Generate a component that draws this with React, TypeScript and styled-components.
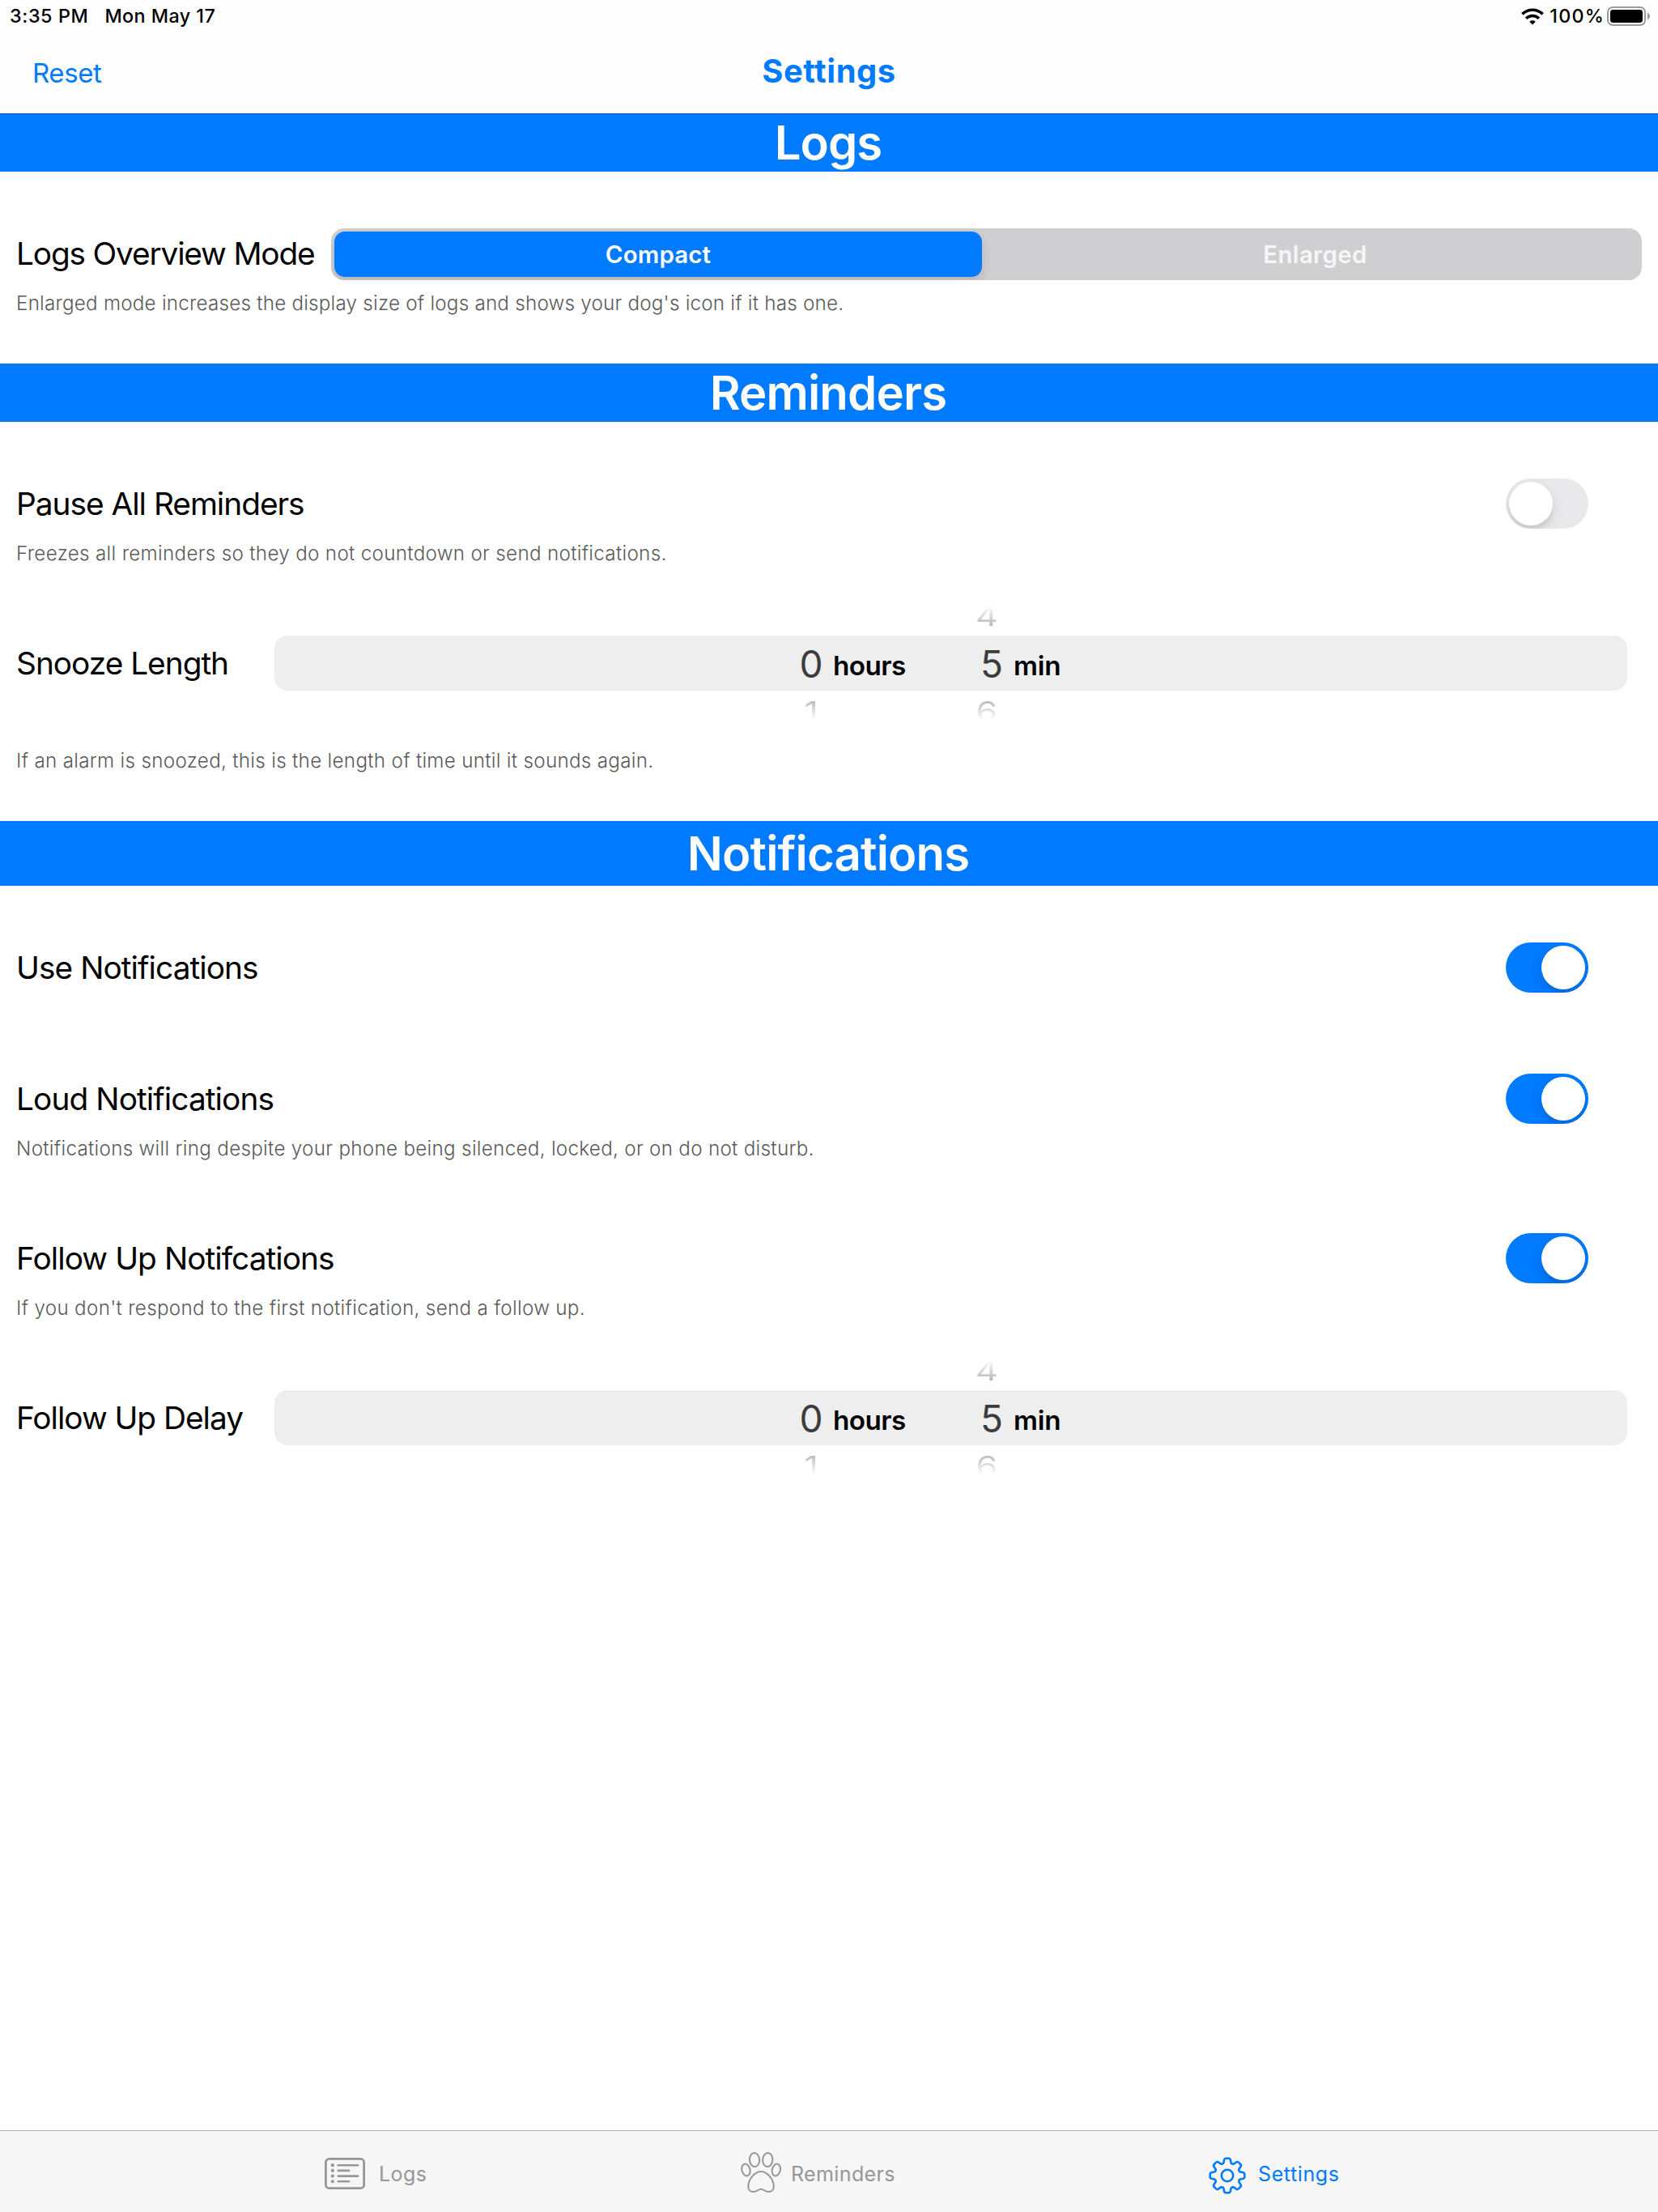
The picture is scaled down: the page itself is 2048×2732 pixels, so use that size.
import React, { useState } from "react";
import styled, { createGlobalStyle } from "styled-components";

const BLUE = "#007aff";
const GRAY = "#979797";

const GlobalStyle = createGlobalStyle`
  *, *::before, *::after { box-sizing: border-box; }
  body {
    margin: 0;
    background: #fff;
    color: #000;
    font-family: Inter, "Liberation Sans", sans-serif;
  }
  button { font: inherit; color: inherit; border: 0; padding: 0; background: none; }
`;

const Screen = styled.div`
  display: flex;
  flex-direction: column;
  width: 2048px;
  height: 2732px;
  overflow: hidden;
`;

/* ---------- status bar ---------- */

const StatusBar = styled.div`
  display: flex;
  align-items: center;
  height: 40px;
  padding: 0 9px 0 12px;
  background: #fefefe;
  font-size: 23.3px;
  font-weight: 500;
  white-space: nowrap;
`;

const StatusText = styled.span<{ $track: number; $gap?: number }>`
  padding-bottom: 1px;
  letter-spacing: ${(p) => p.$track}px;
  margin-left: ${(p) => p.$gap ?? 0}px;
`;

const StatusSpacer = styled.div`
  flex: 1;
`;

const WifiSvg = styled.svg`
  width: 28px;
  height: 21px;
`;

const BatterySvg = styled.svg`
  width: 54px;
  height: 24px;
  margin-left: 3px;
`;

/* ---------- navigation bar ---------- */

const NavBar = styled.header`
  display: grid;
  grid-template-columns: 1fr auto 1fr;
  align-items: center;
  height: 101px;
  padding: 0 40px;
  background: #fefefe;
  border-bottom: 1px solid #0055b3;
  color: ${BLUE};
`;

const NavButton = styled.button`
  justify-self: start;
  font-size: 33px;
  letter-spacing: -0.4px;
`;

const NavTitle = styled.h1`
  margin: 0;
  padding-bottom: 6px;
  font-size: 39.8px;
  font-weight: 700;
  letter-spacing: 0.6px;
`;

/* ---------- settings list ---------- */

const Content = styled.main`
  flex: 1;
`;

const Band = styled.h2<{ $height: number; $track: number }>`
  display: flex;
  align-items: center;
  justify-content: center;
  height: ${(p) => p.$height}px;
  margin: 0;
  padding: 0 2px 1px 0;
  background: ${BLUE};
  color: #fff;
  font-size: 58px;
  font-weight: 600;
  line-height: 68px;
  letter-spacing: ${(p) => p.$track}px;
`;

const SectionBody = styled.div<{ $bottom: number }>`
  padding: 70px 0 ${(p) => p.$bottom}px 20px;
`;

const SettingRow = styled.div<{ $top?: number }>`
  display: flex;
  align-items: center;
  margin-top: ${(p) => p.$top ?? 0}px;
`;

const Label = styled.div<{ $width?: number; $track: number; $lift?: number }>`
  width: ${(p) => (p.$width ? `${p.$width}px` : "auto")};
  padding-bottom: ${(p) => p.$lift ?? 0}px;
  font-size: 38.8px;
  line-height: 48px;
  letter-spacing: ${(p) => p.$track}px;
  white-space: nowrap;
`;

const Hint = styled.p<{ $top: number; $track: number }>`
  margin: ${(p) => p.$top}px 0 0;
  color: #5a5a5a;
  font-size: 24.2px;
  font-weight: 300;
  line-height: 30px;
  letter-spacing: ${(p) => p.$track}px;
`;

/* ---------- segmented control ---------- */

const Segmented = styled.div`
  display: flex;
  flex: 1;
  height: 64px;
  margin-right: 20px;
  padding: 4px;
  border-radius: 16px;
  background: #cfcfd2;
  overflow: hidden;
`;

const Segment = styled.button<{ $active: boolean; $track: number }>`
  flex: ${(p) => (p.$active ? "0 0 800px" : "1")};
  border-radius: 13px;
  background: ${(p) => (p.$active ? BLUE : "transparent")};
  box-shadow: ${(p) => (p.$active ? "0 6px 14px rgba(0, 0, 0, 0.13)" : "none")};
  color: ${(p) => (p.$active ? "#fff" : "#f6f6f7")};
  font-size: 29.4px;
  font-weight: 600;
  letter-spacing: ${(p) => p.$track}px;
  padding: ${(p) => (p.$active ? "0" : "0 0 0 12px")};
`;

/* ---------- switch ---------- */

const SwitchTrack = styled.button<{ $on: boolean }>`
  display: flex;
  justify-content: ${(p) => (p.$on ? "flex-end" : "flex-start")};
  width: 102px;
  height: 62px;
  margin: 0 86px 0 auto;
  padding: 4px;
  border-radius: 31px;
  background: ${(p) => (p.$on ? BLUE : "#e9e9eb")};
  overflow: hidden;
`;

const SwitchKnob = styled.span`
  width: 54px;
  height: 54px;
  border-radius: 50%;
  background: #fff;
  box-shadow: 0 6px 16px rgba(0, 0, 0, 0.12), 0 6px 2px rgba(0, 0, 0, 0.04);
`;

/* ---------- time wheel ---------- */

const Wheel = styled.div`
  flex: 1;
  height: 144px;
  margin-right: 38px;
`;

const WheelLine = styled.div<{ $second: number }>`
  display: grid;
  grid-template-columns: 643px 40px ${(p) => p.$second}px 40px 1fr;
  grid-template-areas: ". hour hourUnit minute minuteUnit";
  align-items: center;
`;

const WheelSelected = styled(WheelLine)`
  height: 68px;
  border-radius: 16px;
  background: #eeeeee;
  color: #3c3c3c;
`;

const WheelNeighbour = styled(WheelLine)<{ $side: "above" | "below" }>`
  height: 38px;
  color: #b4b4b4;
  padding: ${(p) => (p.$side === "above" ? "0 0 12px" : "11px 0 0")};
  mask-image: ${(p) =>
    p.$side === "above"
      ? "linear-gradient(to bottom, transparent 2px, #000 26px)"
      : "linear-gradient(to top, transparent 2px, #000 28px)"};
`;

const Digit = styled.span<{ $area: "hour" | "minute"; $flat?: boolean }>`
  grid-area: ${(p) => p.$area};
  display: block;
  padding-top: ${(p) => (p.$flat ? 0 : 1)}px;
  text-align: center;
  font-size: 46px;
  font-weight: 400;
  line-height: 26px;
  transform: ${(p) => (p.$flat ? "scale(0.94, 0.74)" : "none")};
`;

const Unit = styled.span<{ $area: "hourUnit" | "minuteUnit"; $track: number }>`
  grid-area: ${(p) => p.$area};
  padding: 5px 0 0 7px;
  color: #000;
  font-size: 33.2px;
  font-weight: 600;
  line-height: 40px;
  letter-spacing: ${(p) => p.$track}px;
`;

/* ---------- tab bar ---------- */

const TabBar = styled.nav`
  display: flex;
  height: 101px;
  padding: 0 0 0 401px;
  border-top: 1px solid #b2b3b5;
  background: #f6f6f6;
`;

const Tab = styled.button<{ $active?: boolean; $width: number; $gap: number; $track: number }>`
  display: flex;
  align-items: center;
  gap: ${(p) => p.$gap}px;
  width: ${(p) => p.$width}px;
  height: 106px;
  color: ${(p) => (p.$active ? BLUE : GRAY)};
  font-size: 25px;
  letter-spacing: ${(p) => p.$track}px;
`;

const TabIcon = styled.svg<{ $w: number; $h: number; $shift?: number }>`
  flex: none;
  width: ${(p) => p.$w}px;
  height: ${(p) => p.$h}px;
  margin-top: ${(p) => p.$shift ?? 0}px;
  fill: none;
  stroke: currentColor;
  stroke-linecap: round;
  stroke-linejoin: round;
`;

/* ---------- icons ---------- */

const WifiIcon = () => (
  <WifiSvg viewBox="0 0 28 21" fill="none" stroke="#000" strokeWidth="3.7">
    <path d="M1.4 7.4A18 18 0 0 1 26.6 7.4" />
    <path d="M6 12.8A11.4 11.4 0 0 1 22 12.8" />
    <path d="M10.2 16.7A5.6 5.6 0 0 1 17.8 16.7L14 20.6Z" fill="#000" stroke="none" />
  </WifiSvg>
);

const BatteryIcon = () => (
  <BatterySvg viewBox="0 0 54 24">
    <rect x="1" y="1" width="46" height="22" rx="6" fill="none" stroke="#9b9b9b" strokeWidth="2" />
    <rect x="4" y="4" width="40" height="16" rx="3.4" fill="#000" />
    <path d="M50 7.5C52 8.6 53 10.2 53 12S52 15.4 50 16.5Z" fill="#9b9b9b" />
  </BatterySvg>
);

const LogsIcon = () => (
  <TabIcon $w={50} $h={39} $shift={-1} viewBox="0 0 50 39" strokeWidth="2.8">
    <rect x="1.4" y="1.4" width="47.2" height="36.2" rx="4.2" />
    {[9.2, 15.9, 22.6, 29.3].map((y, i) => (
      <g key={y}>
        <circle cx="9.8" cy={y} r="2.1" fill="currentColor" stroke="none" />
        <path d={`M16.8 ${y}H${i % 2 ? 30 : 41}`} strokeWidth="2.6" />
      </g>
    ))}
  </TabIcon>
);

const PawIcon = () => (
  <TabIcon $w={50} $h={50} $shift={-4} viewBox="0 0 50 50" strokeWidth="2">
    <ellipse cx="17" cy="9.5" rx="6.1" ry="8.5" transform="rotate(-4 17 9.5)" />
    <ellipse cx="33.2" cy="9.5" rx="6.1" ry="8.5" transform="rotate(4 33.2 9.5)" />
    <ellipse cx="6.4" cy="22" rx="5" ry="7.5" transform="rotate(-14 6.4 22)" />
    <ellipse cx="43.8" cy="22" rx="5" ry="7.5" transform="rotate(14 43.8 22)" />
    <path d="M25 24C17 24 9.2 34.4 9.2 42.4C9.2 46.5 12 49 15.6 49C20 49 21.6 45.8 25 45.8S30 49 34.4 49C38 49 40.8 46.5 40.8 42.4C40.8 34.4 33 24 25 24Z" />
  </TabIcon>
);

/* Outline of an eight-toothed gear centred on the origin. */
const gearPath = () => {
  const parts: string[] = [];
  for (let i = 0; i < 8; i++) {
    const a = (i * Math.PI) / 4;
    const at = (x: number, y: number) =>
      `${(x * Math.cos(a) - y * Math.sin(a)).toFixed(2)} ${(x * Math.sin(a) + y * Math.cos(a)).toFixed(2)}`;
    parts.push(
      `${i ? "L" : "M"}${at(-4.7, -15.4)}L${at(-3.8, -19.6)}Q${at(-3.4, -21.3)} ${at(-1.9, -21.3)}`,
      `L${at(1.9, -21.3)}Q${at(3.4, -21.3)} ${at(3.8, -19.6)}L${at(4.7, -15.4)}Q${at(5.3, -14.2)} ${at(7.3, -14.4)}`
    );
  }
  return `${parts.join("")}Z`;
};

const GearIcon = () => (
  <TabIcon $w={46} $h={46} $shift={4} viewBox="-23 -23 46 46" strokeWidth="2.6">
    <path d={gearPath()} />
    <circle r="7.2" />
  </TabIcon>
);

/* ---------- composed controls ---------- */

const Switch = ({ initial }: { initial: boolean }) => {
  const [on, setOn] = useState(initial);
  return (
    <SwitchTrack $on={on} role="switch" aria-checked={on} onClick={() => setOn(!on)}>
      <SwitchKnob />
    </SwitchTrack>
  );
};

const TimeWheel = () => (
  <Wheel>
    <WheelNeighbour $side="above" $second={177}>
      <Digit $area="minute" $flat>4</Digit>
    </WheelNeighbour>
    <WheelSelected $second={183}>
      <Digit $area="hour">0</Digit>
      <Unit $area="hourUnit" $track={-0.5}>hours</Unit>
      <Digit $area="minute">5</Digit>
      <Unit $area="minuteUnit" $track={-0.2}>min</Unit>
    </WheelSelected>
    <WheelNeighbour $side="below" $second={177}>
      <Digit $area="hour" $flat>1</Digit>
      <Digit $area="minute" $flat>6</Digit>
    </WheelNeighbour>
  </Wheel>
);

const ModePicker = () => {
  const [mode, setMode] = useState("Compact");
  return (
    <Segmented>
      <Segment $active={mode === "Compact"} $track={0.2} onClick={() => setMode("Compact")}>
        Compact
      </Segment>
      <Segment $active={mode === "Enlarged"} $track={0.35} onClick={() => setMode("Enlarged")}>
        Enlarged
      </Segment>
    </Segmented>
  );
};

export default function App() {
  return (
    <>
      <GlobalStyle />
      <Screen>
        <StatusBar>
          <StatusText $track={0.61}>3:35 PM</StatusText>
          <StatusText $track={0.45} $gap={20}>Mon May 17</StatusText>
          <StatusSpacer />
          <WifiIcon />
          <StatusText $track={1.2} $gap={7}>100%</StatusText>
          <BatteryIcon />
        </StatusBar>
        <NavBar>
          <NavButton>Reset</NavButton>
          <NavTitle>Settings</NavTitle>
        </NavBar>

        <Content>
          <Band $height={71} $track={-0.96}>Logs</Band>
          <SectionBody $bottom={59}>
            <SettingRow>
              <Label $width={389} $track={-1.16} $lift={3}>Logs Overview Mode</Label>
              <ModePicker />
            </SettingRow>
            <Hint $top={14} $track={0.232}>
              Enlarged mode increases the display size of logs and shows your dog's icon if it has one.
            </Hint>
          </SectionBody>

          <Band $height={72} $track={-0.8}>Reminders</Band>
          <SectionBody $bottom={59}>
            <SettingRow>
              <Label $track={-1.01}>Pause All Reminders</Label>
              <Switch initial={false} />
            </SettingRow>
            <Hint $top={16} $track={0.32}>
              Freezes all reminders so they do not countdown or send notifications.
            </Hint>
            <SettingRow $top={48}>
              <Label $width={319} $track={-1}>Snooze Length</Label>
              <TimeWheel />
            </SettingRow>
            <Hint $top={34} $track={0.31}>
              If an alarm is snoozed, this is the length of time until it sounds again.
            </Hint>
          </SectionBody>

          <Band $height={80} $track={-0.81}>Notifications</Band>
          <SectionBody $bottom={0}>
            <SettingRow>
              <Label $track={-0.92}>Use Notifications</Label>
              <Switch initial />
            </SettingRow>
            <SettingRow $top={100}>
              <Label $track={-0.9}>Loud Notifications</Label>
              <Switch initial />
            </SettingRow>
            <Hint $top={16} $track={0.305}>
              Notifications will ring despite your phone being silenced, locked, or on do not disturb.
            </Hint>
            <SettingRow $top={89}>
              <Label $track={-0.93}>Follow Up Notifcations</Label>
              <Switch initial />
            </SettingRow>
            <Hint $top={16} $track={0.32}>
              If you don't respond to the first notification, send a follow up.
            </Hint>
            <SettingRow $top={48}>
              <Label $width={319} $track={-1.02}>Follow Up Delay</Label>
              <TimeWheel />
            </SettingRow>
          </SectionBody>
        </Content>

        <TabBar>
          <Tab $width={514} $gap={17} $track={0.45}>
            <LogsIcon />
            Logs
          </Tab>
          <Tab $width={577.5} $gap={12} $track={0.38}>
            <PawIcon />
            Reminders
          </Tab>
          <Tab $active $width={240} $gap={15.5} $track={0.6}>
            <GearIcon />
            Settings
          </Tab>
        </TabBar>
      </Screen>
    </>
  );
}
